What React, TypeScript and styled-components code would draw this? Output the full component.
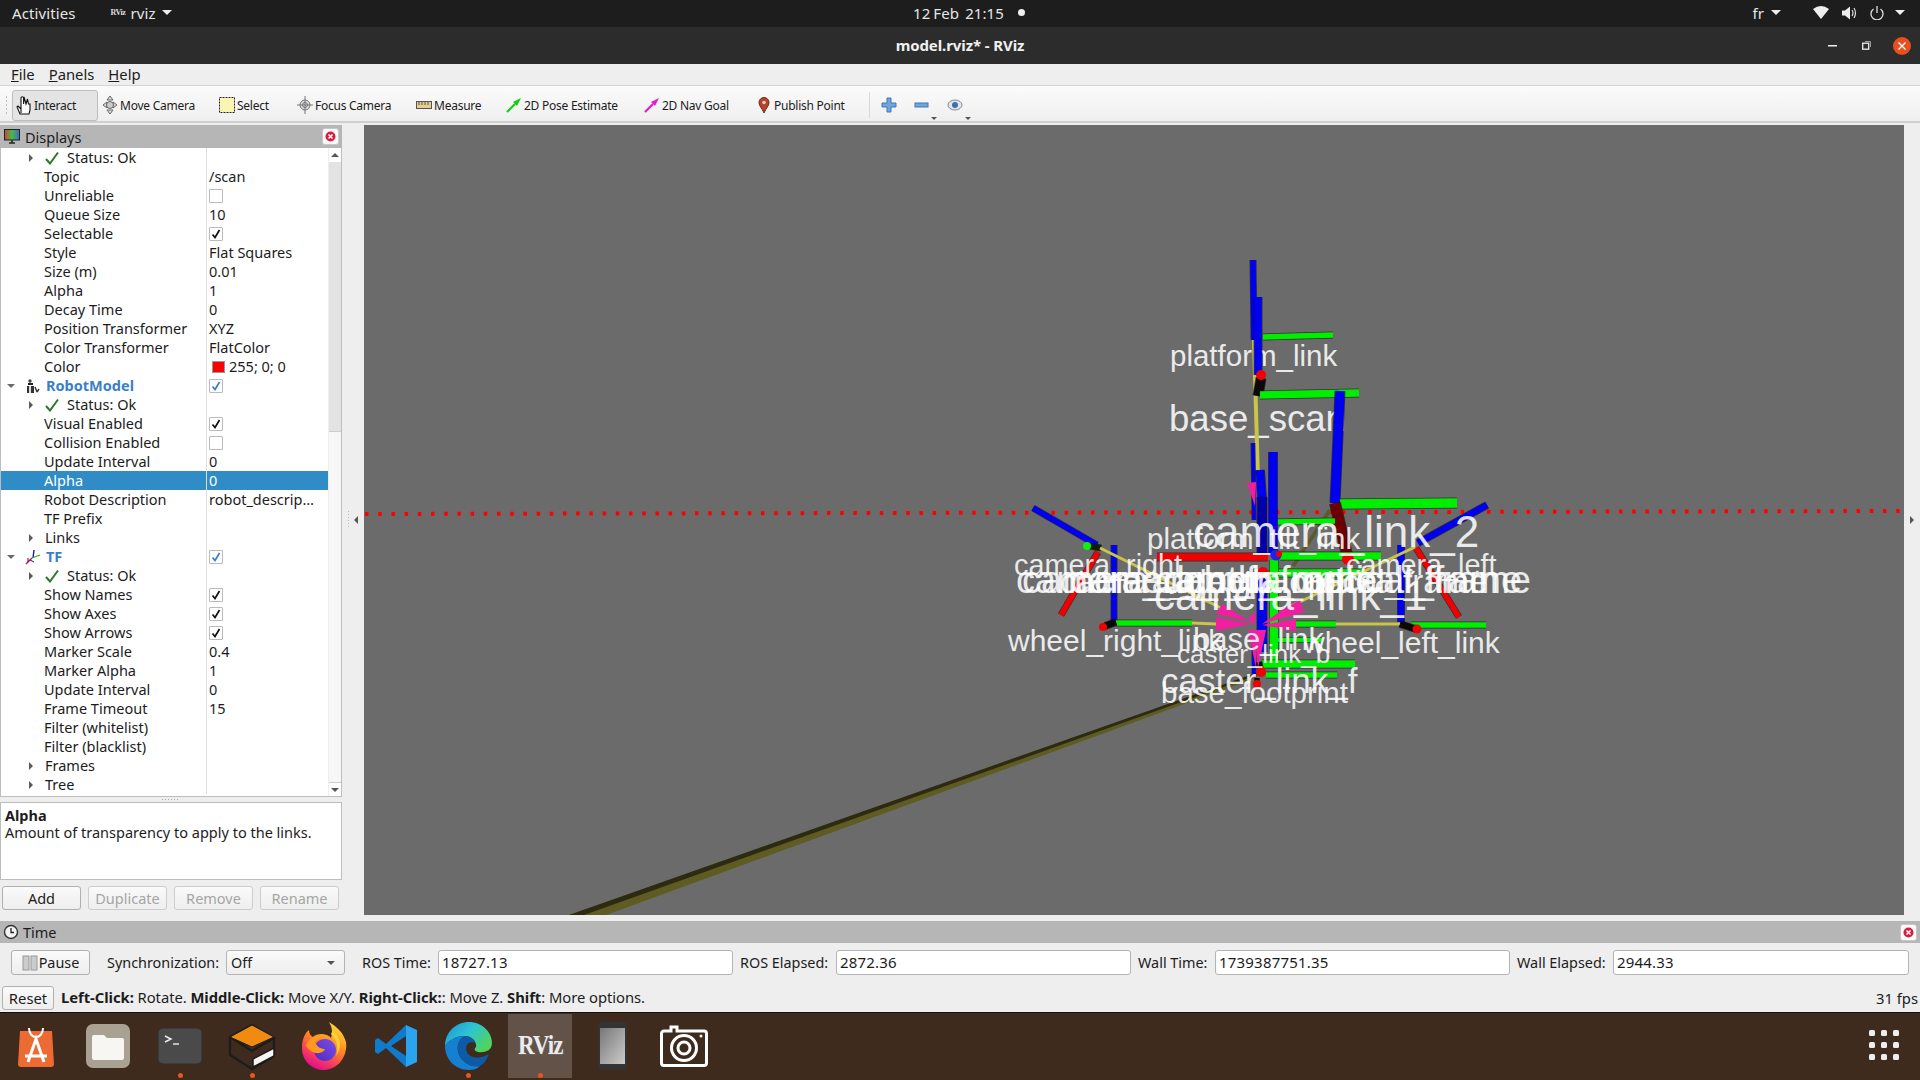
import React from "react";
import styled, { createGlobalStyle } from "styled-components";

const UI = `"Noto Sans", "Open Sans", sans-serif`;

const Global = createGlobalStyle`
  html, body { margin: 0; padding: 0; width: 1920px; height: 1080px; overflow: hidden; background: #eee; }
  #root { width: 1920px; height: 1080px; }
  * { box-sizing: border-box; }
`;

const Page = styled.div`
  width: 1920px; height: 1080px; display: flex; flex-direction: column;
  font-family: ${UI}; font-size: 14.5px; letter-spacing: 0; color: #1c1c1c; background: #eee; overflow: hidden;
`;

/* GNOME top bar */
const TopBar = styled.div`
  height: 27px; flex: none; background: #1d1d1d; color: #e6e6e6; display: grid;
  grid-template-columns: 1fr auto 1fr; align-items: center; font-size: 15px; padding: 0 15px 2px 12px; letter-spacing: 0.1px;
`;
const TopLeft = styled.div`display: flex; align-items: center;`;
const TopRight = styled.div`display: flex; align-items: center; justify-content: flex-end;`;
const AppName = styled.div`display: flex; align-items: center; gap: 6px; margin-left: 35px;`;
const Caret = styled.span<{ $c?: string; $l?: number }>`
  width: 0; height: 0; border-left: 5px solid transparent; border-right: 5px solid transparent;
  border-top: 5px solid ${(p) => p.$c || "#eee"}; margin-left: ${(p) => p.$l ?? 0}px;
`;
const Clock = styled.div`display: flex; align-items: center; gap: 14px; margin-left: 21px; word-spacing: -1px;`;
const Dot = styled.span`width: 7px; height: 7px; border-radius: 50%; background: #eee;`;
const Tiny = styled.span`font: 700 8px "Liberation Serif", serif; letter-spacing: -0.5px; color: #ddd; width: 14px;`;

/* Window title */
const TitleBar = styled.div`
  height: 37px; flex: none; background: #2c2c2c; color: #f0f0f0; font-weight: 700; font-size: 15px; padding-bottom: 1px;
  display: flex; align-items: center; justify-content: center; position: relative; letter-spacing: -0.1px;
`;
const WinControls = styled.div`
  position: absolute; right: 9px; top: 9px; height: 19px; display: flex; align-items: center;
`;
const WinClose = styled.span`
  width: 18px; height: 18px; border-radius: 50%; background: #e4501f; display: flex; align-items: center; justify-content: center; margin-left: 22px;
`;

const MenuBar = styled.div`
  height: 22px; flex: none; background: #eee; border-bottom: 1px solid #d4d4d4; display: flex; align-items: center;
  gap: 14px; padding: 0 0 1px 11px; font-size: 14.8px;
`;
const ToolBar = styled.div`
  height: 37px; flex: none; display: flex; align-items: center; padding: 3px 0 0 12px; position: relative;
  background: linear-gradient(#fbfbfb, #efefef); border-bottom: 2px solid #cfcfcf; font-size: 12px; letter-spacing: -0.25px;
`;
const Grip = styled.span`
  position: absolute; left: 5px; top: 9px; height: 20px; width: 3px;
  background: radial-gradient(circle, #bbb 1px, transparent 1px) 0 0 / 3px 4px;
`;
const ToolButton = styled.div<{ $w: number; $active?: boolean }>`
  width: ${(p) => p.$w}px; height: 31px; display: flex; align-items: center; gap: 2px; padding-left: 3px; white-space: nowrap;
  border-radius: 3px; border: 1px solid ${(p) => (p.$active ? "#bdbdbd" : "transparent")};
  background: ${(p) => (p.$active ? "#e4e4e4" : "transparent")};
`;
const ToolSep = styled.span`width: 1px; height: 26px; background: #d8d8d8; margin-right: 11px;`;
const MiniTool = styled.span<{ $w: number }>`width: ${(p) => p.$w}px; display: flex; align-items: center; position: relative; height: 31px;`;
const MiniCaret = styled.span<{ $r: number }>`
  position: absolute; right: ${(p) => p.$r}px; bottom: 1px; width: 0; height: 0;
  border-left: 3px solid transparent; border-right: 3px solid transparent; border-top: 3px solid #555;
`;

/* Main */
const Main = styled.div`height: 792px; flex: none; display: flex; padding-top: 2px;`;
const LeftPanel = styled.div`width: 342px; flex: none; display: flex; flex-direction: column;`;
const PanelHead = styled.div`
  height: 23px; flex: none; background: #b6b6b6; display: flex; align-items: center; gap: 5px; padding: 0 3px 0 4px; font-size: 14.5px;
`;
const HeadTitle = styled.span`flex: 1;`;
const CloseBtn = styled.span`
  width: 17px; height: 17px; border-radius: 3px; background: #fafafa; border: 1px solid #c8c8c8; display: flex; align-items: center; justify-content: center;
`;
const Tree = styled.div`
  height: 649px; flex: none; display: flex; background: #fff; border: 1px solid #bdbdbd; border-top: 0; 
`;
const Rows = styled.div`width: 327px; flex: none; overflow: hidden;`;
const Row = styled.div<{ $sel?: boolean }>`
  height: 19px; display: flex; line-height: 19px; white-space: nowrap;
  background: ${(p) => (p.$sel ? "#308cc6" : "transparent")}; color: ${(p) => (p.$sel ? "#fff" : "inherit")};
`;
const NameCell = styled.div<{ $pad: number }>`
  width: 205px; flex: none; display: flex; align-items: center; padding-left: ${(p) => p.$pad}px;
`;
const ValueCell = styled.div`
  flex: 1; border-left: 1px solid #dedede; padding-left: 2px; display: flex; align-items: center; overflow: hidden;
`;
const RArrow = styled.span`
  width: 0; height: 0; border-top: 4px solid transparent; border-bottom: 4px solid transparent; border-left: 4px solid #5a5a5a;
  margin-right: 12px;
`;
const DArrow = styled.span`
  width: 0; height: 0; border-left: 4px solid transparent; border-right: 4px solid transparent; border-top: 4px solid #6a6a6a;
  margin-right: 10px;
`;
const Blue = styled.span`color: #3a7fc9; font-weight: 700; margin-left: 5px;`;
const Box = styled.span`
  width: 14px; height: 14px; border: 1px solid #bbb; background: #fff; display: flex; align-items: center; justify-content: center; border-radius: 1px;
`;
const Swatch = styled.span`width: 13px; height: 12px; background: #f00; border: 1px solid #999; margin: 0 4px 0 3px;`;
const Scroll = styled.div`width: 13px; flex: none; display: flex; flex-direction: column; background: #f7f7f7; border-left: 1px solid #eee;`;
const ScrollEnd = styled.div<{ $down?: boolean }>`
  height: 14px; flex: none; background: #fff; display: flex; align-items: center; justify-content: center;
  ${(p) => (p.$down ? "border-top: 1px solid #ccc; margin-top: auto;" : "")}
`;
const ScrollThumb = styled.div`height: 270px; flex: none; background: #e3e3e3; border-bottom: 1px solid #ccc;`;
const UpTri = styled.span`width:0;height:0;border-left:4px solid transparent;border-right:4px solid transparent;border-bottom:4px solid #555;`;
const DownTri = styled.span`width:0;height:0;border-left:4px solid transparent;border-right:4px solid transparent;border-top:4px solid #555;`;
const SplitGap = styled.div`height: 5px; flex: none; display: flex; align-items: center; justify-content: center;`;
const HDots = styled.span`width: 18px; height: 1px; background: repeating-linear-gradient(90deg, #aaa 0 1px, transparent 1px 3px);`;
const Desc = styled.div`
  height: 78px; flex: none; background: #fff; border: 1px solid #bdbdbd; padding: 4px 4px; line-height: 17px;
`;
const DescTitle = styled.div`font-weight: 700;`;
const PanelButtons = styled.div`display: flex; gap: 7px; padding: 6px 0 0 2px;`;
const Btn = styled.div<{ $off?: boolean; $w: number; $h?: number }>`
  width: ${(p) => p.$w}px; height: ${(p) => p.$h ?? 24}px; flex: none; border: 1px solid ${(p) => (p.$off ? "#cdcdcd" : "#b0b0b0")}; border-radius: 3px;
  background: linear-gradient(#fafafa, #eee); display: flex; align-items: center; justify-content: center; gap: 1px;
  color: ${(p) => (p.$off ? "#a5a5a5" : "inherit")};
`;
const VSplit = styled.div<{ $w: number }>`
  width: ${(p) => p.$w}px; flex: none; display: flex; align-items: center; justify-content: center; gap: 5px; position: relative;
`;
const VDots = styled.span`width: 1px; height: 18px; background: repeating-linear-gradient(#bbb 0 1px, transparent 1px 3px);`;
const LTri = styled.span`width:0;height:0;border-top:4px solid transparent;border-bottom:4px solid transparent;border-right:4px solid #555;`;
const RTri = styled.span`width:0;height:0;border-top:4px solid transparent;border-bottom:4px solid transparent;border-left:4px solid #555;`;
const Viewport = styled.div`width: 1540px; height: 790px; flex: none; background: #6b6b6b;`;
const Scene = styled.svg`display: block; width: 1540px; height: 790px;`;
const Label3D = styled.text`font-family: "Liberation Sans", sans-serif; fill: #fff; letter-spacing: 0; opacity: 0.86;`;

/* Time panel */
const TimeHead = styled(PanelHead)`margin-top: 6px; flex: none; height: 22px; padding-left: 3px; gap: 4px;`;
const TimeRow = styled.div`height: 25px; flex: none; margin-top: 7px; display: flex; align-items: center; padding-left: 11px; font-size: 14.4px;`;
const TimeLabel = styled.span<{ $w: number; $ml: number }>`width: ${(p) => p.$w}px; margin-left: ${(p) => p.$ml}px; flex: none; white-space: nowrap;`;
const Field = styled.div<{ $w: number }>`
  width: ${(p) => p.$w}px; height: 25px; flex: none; background: #fff; border: 1px solid #b4b4b4; border-radius: 3px; padding-left: 3px; line-height: 22px; font-size: 15px; letter-spacing: .2px;
`;
const Combo = styled.div`
  width: 119px; height: 25px; flex: none; background: linear-gradient(#fafafa, #eee); border: 1px solid #b4b4b4; border-radius: 3px; padding: 0 9px 0 4px;
  display: flex; align-items: center; justify-content: space-between;
`;
const StatusRow = styled.div`height: 24px; margin-top: 11px; flex: none; display: flex; align-items: center; padding: 0 2px; white-space: nowrap; font-size: 14.8px;`;
const StatusText = styled.span`margin-left: 7px; flex: 1; letter-spacing: -.05px; padding-bottom: 2px;`;
const Dock = styled.div`
  margin-top: 2px; height: 68px; flex: none; background: #3f2a1e; border-top: 1px solid #15100c; display: flex; align-items: center; position: relative; padding-bottom: 2px;
`;
const DockSlot = styled.div<{ $active?: boolean }>`
  width: 72px; height: 64px; flex: none; padding: 0 4px; display: flex; align-items: center; justify-content: center; position: relative;
  background: ${(p) => (p.$active ? "rgba(255,255,255,.19)" : "transparent")}; background-clip: content-box; 
`;
const DockPip = styled.span`position: absolute; bottom: 0; left: 50%; margin-left: -2.5px; width: 5px; height: 5px; border-radius: 50%; background: #e95420;`;
const RVizLogo = styled.span`font: 700 27px "Liberation Serif", serif; color: #ececec; letter-spacing: -1px; transform: scaleX(.85); text-shadow: 1px 1px 0 #666;`;
const AppGrid = styled.div`
  position: absolute; right: 21px; top: 17px; display: grid; grid-template-columns: repeat(3, 6px); gap: 6px;
`;
const GridDot = styled.span`width: 6px; height: 6px; border-radius: 1.5px; background: #eee;`;

type Rw = { k: "leaf" | "exp" | "status" | "disp"; n?: string; v?: string; c?: boolean; blue?: boolean; color?: boolean; icon?: string; sel?: boolean };
const rows: Rw[] = [
  { k: "status" }, { k: "leaf", n: "Topic", v: "/scan" }, { k: "leaf", n: "Unreliable", c: false }, { k: "leaf", n: "Queue Size", v: "10" },
  { k: "leaf", n: "Selectable", c: true }, { k: "leaf", n: "Style", v: "Flat Squares" }, { k: "leaf", n: "Size (m)", v: "0.01" },
  { k: "leaf", n: "Alpha", v: "1" }, { k: "leaf", n: "Decay Time", v: "0" }, { k: "leaf", n: "Position Transformer", v: "XYZ" },
  { k: "leaf", n: "Color Transformer", v: "FlatColor" }, { k: "leaf", n: "Color", v: "255; 0; 0", color: true },
  { k: "disp", n: "RobotModel", c: true, blue: true, icon: "robot" }, { k: "status" }, { k: "leaf", n: "Visual Enabled", c: true },
  { k: "leaf", n: "Collision Enabled", c: false }, { k: "leaf", n: "Update Interval", v: "0" }, { k: "leaf", n: "Alpha", v: "0", sel: true },
  { k: "leaf", n: "Robot Description", v: "robot_descrip…" }, { k: "leaf", n: "TF Prefix" }, { k: "exp", n: "Links" },
  { k: "disp", n: "TF", c: true, blue: true, icon: "tf" }, { k: "status" }, { k: "leaf", n: "Show Names", c: true }, { k: "leaf", n: "Show Axes", c: true },
  { k: "leaf", n: "Show Arrows", c: true }, { k: "leaf", n: "Marker Scale", v: "0.4" }, { k: "leaf", n: "Marker Alpha", v: "1" },
  { k: "leaf", n: "Update Interval", v: "0" }, { k: "leaf", n: "Frame Timeout", v: "15" }, { k: "leaf", n: "Filter (whitelist)" },
  { k: "leaf", n: "Filter (blacklist)" }, { k: "exp", n: "Frames" }, { k: "exp", n: "Tree" },
];

const CheckMark = ({ blue }: { blue?: boolean }) => (
  <svg width="10" height="10" viewBox="0 0 10 10"><path d="M1.5 5.5 L4 8.5 L8.5 1" fill="none" stroke={blue ? "#3a7fc9" : "#111"} strokeWidth="1.7" /></svg>
);
const CheckGap = styled.svg`margin-right: 8px;`;
const GreenCheck = () => (
  <CheckGap width="14" height="14" viewBox="0 0 14 14"><path d="M1 8 L5 12.5 L13 1.5" fill="none" stroke="#2b7a2b" strokeWidth="2" /></CheckGap>
);
const RobotIcon = () => (
  <svg width="16" height="16" viewBox="0 0 16 16">
    <circle cx="5" cy="3" r="1.7" fill="#445" /><rect x="3" y="5" width="5" height="2" fill="#222" /><rect x="2" y="8" width="7" height="7" fill="#333" /><rect x="4" y="8" width="2" height="7" fill="#ddd" />
    <path d="M10 9 L12 14 M14 11 L12 14" stroke="#333" strokeWidth="1.4" />
  </svg>
);
const TfIcon = () => (
  <svg width="16" height="16" viewBox="0 0 16 16">
    <path d="M7 9 L1 15" stroke="#e11" strokeWidth="1.4" /><path d="M8 9 L9 1" stroke="#11c" strokeWidth="1.4" /><path d="M7 9 L15 6" stroke="#1b1" strokeWidth="1.2" /><path d="M3 13 L3 9 M5 11 L9 13" stroke="#11c" strokeWidth="1" />
  </svg>
);
const CloseDot = () => (
  <svg width="11" height="11" viewBox="0 0 11 11"><circle cx="5.5" cy="5.5" r="5" fill="#d81e3c" /><path d="M3.5 3.5 L7.5 7.5 M7.5 3.5 L3.5 7.5" stroke="#fff" strokeWidth="1.5" /></svg>
);

const tools: { w: number; label: string; icon: React.ReactNode; active?: boolean }[] = [
  { w: 86, label: "Interact", active: true, icon: <svg width="16" height="22" viewBox="0 0 16 22"><path d="M5 19 V4 a1.3 1.3 0 0 1 2.6 0 V10 L8 3 l2 7 l1.5 -5 l1 5 l1.5 0 V16 l-1 4 H4 L1 13 l1 -1 l3 3" fill="#fff" stroke="#111" strokeWidth="1.1" /></svg> },
  { w: 117, label: "Move Camera", icon: <svg width="16" height="20" viewBox="0 0 16 20"><path d="M8 1 L11 5 H5 Z M8 19 L11 15 H5 Z M1 10 L5 7 V13 Z M15 10 L11 7 V13 Z" fill="#ddd" stroke="#666" /><circle cx="8" cy="10" r="3.5" fill="#ccc" stroke="#666" /></svg> },
  { w: 78, label: "Select", icon: <svg width="16" height="16" viewBox="0 0 16 16"><rect x="0.5" y="0.5" width="15" height="15" fill="#fbf5b4" stroke="#222" strokeDasharray="2 1" /></svg> },
  { w: 119, label: "Focus Camera", icon: <svg width="16" height="20" viewBox="0 0 16 20"><circle cx="8" cy="10" r="5" fill="#ddd" stroke="#777" /><circle cx="8" cy="10" r="2.5" fill="none" stroke="#777" /><path d="M8 1 V19 M0 10 H16" stroke="#777" /></svg> },
  { w: 90, label: "Measure", icon: <svg width="16" height="8" viewBox="0 0 16 8"><rect x="0.5" y="0.5" width="15" height="7" fill="#e4cf8e" stroke="#555" /><path d="M3 1 V4 M6 1 V4 M9 1 V4 M12 1 V4" stroke="#555" /></svg> },
  { w: 138, label: "2D Pose Estimate", icon: <svg width="16" height="16" viewBox="0 0 16 16"><path d="M1 15 L9 7" stroke="#1c1" strokeWidth="2.2" /><path d="M15 1 L7 5 L11 9 Z" fill="#1c1" /></svg> },
  { w: 112, label: "2D Nav Goal", icon: <svg width="16" height="16" viewBox="0 0 16 16"><path d="M1 15 L9 7" stroke="#e01fc8" strokeWidth="2.2" /><path d="M15 1 L7 5 L11 9 Z" fill="#e01fc8" /></svg> },
  { w: 117, label: "Publish Point", icon: <svg width="16" height="17" viewBox="0 0 16 17"><path d="M8 16 C6 11 3 9 3 5.5 a5 5 0 0 1 10 0 C13 9 10 11 8 16 Z" fill="#b5432b" stroke="#70291a" /><circle cx="8" cy="5.5" r="1.8" fill="#e9c7b8" /></svg> },
];

/* ---- 3D scene, in screen coordinates ---- */
type Ax = [number, number, number, number, number, string, string?];
const B = "#0000f0", G = "#00ee00", R = "#f00000", K = "#0c0808", Y = "#c9c44a", O = "#5c5b30";
const backAxes: Ax[] = [
  [1254, 340, 1258, 480, 4, Y], [1258, 480, 1259, 530, 3, Y],
  [1253, 260, 1254, 340, 7, B], [1263, 337, 1333, 335, 7, G], [1261, 378, 1258, 396, 11, K], [1258, 297, 1258, 375, 9, B],
  [1260, 395, 1359, 393, 9, G], [1340, 391, 1335, 503, 11, B], [1340, 504, 1457, 503, 11, G],
  [1330, 510, 1293, 566, 4, O], [1335, 503, 1348, 559, 12, "#6a0000"],
  [1253, 443, 1254, 520, 5, B], [1278, 522, 1335, 521, 7, G], [1273, 452, 1273, 555, 10, B], [1260, 470, 1262, 500, 10, B], [1262, 497, 1262, 553, 11, "#0000a8"],
  [1157, 557, 1268, 557, 9, R], [1280, 556, 1381, 556, 9, G], [1278, 573, 1367, 573, 9, G],
  [1033, 508, 1097, 545, 7, B], [1098, 552, 1061, 615, 7, R], [1114, 545, 1114, 622, 7, B], [1090, 546, 1101, 548, 7, "#0b1e0b"],
  [1100, 548, 1221, 608, 3, Y], [1116, 623, 1192, 623, 7, G], [1192, 623, 1216, 624, 3, Y], [1105, 626, 1116, 622, 8, K],
  [1401, 545, 1401, 622, 8, B], [1418, 543, 1487, 505, 8, B], [1416, 548, 1459, 617, 7, R], [1415, 547, 1289, 607, 3, Y],
  [1336, 624, 1400, 624, 3, Y], [1296, 624, 1336, 624, 7, G], [1411, 625, 1486, 625, 7, G], [1400, 624, 1416, 629, 8, K],
  [1262, 570, 1262, 652, 11, B], [1274, 560, 1274, 661, 10, G], [1278, 640, 1323, 640, 6, G],
  [1262, 664, 1355, 664, 9, G], [1266, 675, 1337, 675, 7, G], [1254, 643, 1254, 677, 5, B], [1259, 662, 1261, 672, 7, K], [1257, 678, 1257, 684, 6, K],
];
const dots: [number, number, number, string][] = [
  [1261, 375, 5, R], [1348, 559, 6, R], [1087, 546, 4, "#11ee11"], [1103, 627, 4, R], [1417, 629, 4.5, R], [1263, 573, 6, R],
  [1276, 555, 5.5, "#2222e0"], [1279, 554, 3, R], [1261, 672, 5, R], [1257, 684, 4, R],
];
const cones: string[] = [
  "1247,483 1256,482 1255,506", "1216,617 1216,631 1251,624", "1296,619 1296,631 1262,625", "1222,604 1251,622 1216,614",
  "1282,610 1300,600 1304,612 1262,624", "1248,618 1256,612 1254,626", "1248,630 1256,630 1256,668", "1254,630 1266,630 1258,668",
];
const backLabels: [string, number, number, number][] = [["platform_link", 1170, 366, 29.5], ["base_scan", 1169, 431, 36.6]];
const labels: [string, number, number, number][] = [
  ["camera_link_2", 1193, 547, 44], ["platform_tilt_link", 1147, 549, 29.5], ["camera_right", 1014, 575, 28.8], ["camera_left", 1346, 575, 28.8],
  ["camera_rgb_frame", 1022, 593, 38], ["camera_depth_frame", 1016, 593, 38], ["camera_rgb_optical_frame", 1070, 593, 38], ["camera_depth_optical_frame", 1060, 593, 33],
  ["camera_optical_frame", 1155, 593, 38], ["camera_link_1", 1154, 610, 42],
  ["wheel_right_link", 1008, 651, 30], ["wheel_left_link", 1303, 653, 30], ["base_link", 1193, 650, 31], ["caster_link_b", 1177, 663, 26],
  ["caster_link_f", 1161, 693, 35], ["base_footprint", 1161, 703, 29.5],
];
const Axis = ({ a }: { a: Ax }) => {
  const [x1, y1, x2, y2, w, c] = a;
  return (
    <g>
      <line x1={x1} y1={y1} x2={x2} y2={y2} stroke="#000" strokeOpacity={w > 4 ? 0.55 : 0} strokeWidth={w} />
      <line x1={x1} y1={y1} x2={x2} y2={y2} stroke={c} strokeWidth={w > 4 ? w - 1.5 : w} />
    </g>
  );
};
const RobotScene = () => (
  <Scene viewBox="364 125 1540 790">
    <polygon points="569,915 606,915 1258,677 1256,673" fill="#5e5c22" />
    <polygon points="569,915 584,915 1257,675 1256,673" fill="#2c2b12" />
    {backLabels.map(([t, x, y, s]) => <Label3D key={t} x={x} y={y} fontSize={s}>{t}</Label3D>)}
    <line x1="365" y1="514" x2="1904" y2="511" stroke="#f00" strokeWidth="4" strokeDasharray="3.5 9.7" />
    {backAxes.map((a, i) => <Axis key={i} a={a} />)}
    {cones.map((p, i) => <polygon key={i} points={p} fill="#f01fa0" />)}
    {dots.map(([x, y, r, c], i) => <circle key={i} cx={x} cy={y} r={r} fill={c} />)}
    {labels.map(([t, x, y, s]) => <Label3D key={t} x={x} y={y} fontSize={s}>{t}</Label3D>)}
  </Scene>
);

export default function App() {
  return (
    <Page>
      <Global />
      <TopBar>
        <TopLeft>
          Activities
          <AppName><Tiny>RViz</Tiny>rviz<Caret /></AppName>
        </TopLeft>
        <Clock>12 Feb&nbsp; 21:15<Dot /></Clock>
        <TopRight>
          fr<Caret $l={7} />
          <svg width="16" height="13" viewBox="0 0 16 13" style={{ marginLeft: 32 }}><path d="M0 3 Q8 -3 16 3 L8 13 Z" fill="#eee" /></svg>
          <svg width="15" height="14" viewBox="0 0 15 14" style={{ marginLeft: 13 }}><path d="M0 4.5 H3 L8 0.5 V13.5 L3 9.5 H0 Z" fill="#eee" /><path d="M10 4 Q12 7 10 10 M12 2 Q15 7 12 12" fill="none" stroke="#ddd" strokeWidth="1.2" /></svg>
          <svg width="14" height="14" viewBox="0 0 14 14" style={{ marginLeft: 13 }}><path d="M3.5 3 A6 6 0 1 0 10.5 3 M7 0 V7" fill="none" stroke="#ddd" strokeWidth="1.3" /></svg>
          <Caret $l={11} />
        </TopRight>
      </TopBar>
      <TitleBar>
        model.rviz* - RViz
        <WinControls>
          <svg width="9" height="2" viewBox="0 0 9 2"><rect width="9" height="1.5" fill="#eee" /></svg>
          <svg width="9" height="9" viewBox="0 0 9 9" style={{ marginLeft: 25 }}><rect x="0.7" y="2.2" width="6" height="6" fill="none" stroke="#eee" strokeWidth="1.3" /><path d="M3 .5 H8.5 V6" fill="none" stroke="#999" /></svg>
          <WinClose><svg width="10" height="10" viewBox="0 0 10 10"><path d="M1.5 1.5 L8.5 8.5 M8.5 1.5 L1.5 8.5" stroke="#fff" strokeWidth="1.3" /></svg></WinClose>
        </WinControls>
      </TitleBar>
      <MenuBar>
        <span><u>F</u>ile</span><span><u>P</u>anels</span><span><u>H</u>elp</span>
      </MenuBar>
      <ToolBar>
        <Grip />
        {tools.map((t) => (
          <ToolButton key={t.label} $w={t.w} $active={t.active}>{t.icon}{t.label}</ToolButton>
        ))}
        <ToolSep />
        <MiniTool $w={33}><svg width="16" height="16" viewBox="0 0 16 16"><path d="M6 1 H10 V6 H15 V10 H10 V15 H6 V10 H1 V6 H6 Z" fill="#6ea5dd" stroke="#3e78b5" /></svg></MiniTool>
        <MiniTool $w={33}><svg width="16" height="6" viewBox="0 0 16 6"><rect x="1" y="1" width="13" height="4" fill="#6ea5dd" stroke="#3e78b5" /></svg><MiniCaret $r={10} /></MiniTool>
        <MiniTool $w={24}><svg width="16" height="12" viewBox="0 0 16 12"><ellipse cx="8" cy="6" rx="7" ry="5" fill="#dfe5ec" stroke="#889" /><circle cx="8" cy="6" r="3" fill="#3f6faa" /></svg><MiniCaret $r={0} /></MiniTool>
      </ToolBar>
      <Main>
        <LeftPanel>
          <PanelHead>
            <svg width="16" height="15" viewBox="0 0 16 15"><defs><linearGradient id="scr" x1="0" x2="1"><stop offset="0" stopColor="#c44" /><stop offset=".5" stopColor="#4b4" /><stop offset="1" stopColor="#46c" /></linearGradient></defs><rect x="0.5" y="0.5" width="15" height="10.5" fill="url(#scr)" stroke="#222" /><path d="M5 14 H11 M8 11 V14" stroke="#222" strokeWidth="1.5" /></svg>
            <HeadTitle>Displays</HeadTitle>
            <CloseBtn><CloseDot /></CloseBtn>
          </PanelHead>
          <Tree>
            <Rows>
              {rows.map((r, i) => (
                <Row key={i} $sel={r.sel}>
                  <NameCell $pad={r.k === "disp" ? 6 : r.k === "leaf" ? 43 : 28}>
                    {r.k === "disp" && <><DArrow />{r.icon === "robot" ? <RobotIcon /> : <TfIcon />}<Blue>{r.n}</Blue></>}
                    {r.k === "status" && <><RArrow /><GreenCheck />Status: Ok</>}
                    {r.k === "exp" && <><RArrow />{r.n}</>}
                    {r.k === "leaf" && r.n}
                  </NameCell>
                  <ValueCell>
                    {r.c !== undefined && <Box>{r.c && <CheckMark blue={r.blue} />}</Box>}
                    {r.color && <Swatch />}
                    {r.v}
                  </ValueCell>
                </Row>
              ))}
            </Rows>
            <Scroll>
              <ScrollEnd><UpTri /></ScrollEnd>
              <ScrollThumb />
              <ScrollEnd $down><DownTri /></ScrollEnd>
            </Scroll>
          </Tree>
          <SplitGap><HDots /></SplitGap>
          <Desc>
            <DescTitle>Alpha</DescTitle>
            Amount of transparency to apply to the links.
          </Desc>
          <PanelButtons>
            <Btn $w={79}>Add</Btn><Btn $w={79} $off>Duplicate</Btn><Btn $w={79} $off>Remove</Btn><Btn $w={79} $off>Rename</Btn>
          </PanelButtons>
        </LeftPanel>
        <VSplit $w={22}><VDots /><LTri /></VSplit>
        <Viewport><RobotScene /></Viewport>
        <VSplit $w={16}><RTri /></VSplit>
      </Main>
      <TimeHead>
        <svg width="16" height="16" viewBox="0 0 16 16"><circle cx="8" cy="8" r="6.5" fill="#f4f4f4" stroke="#333" strokeWidth="1.4" /><path d="M8 4 V8.5 H11" fill="none" stroke="#222" strokeWidth="1.3" /></svg>
        <HeadTitle>Time</HeadTitle>
        <CloseBtn><CloseDot /></CloseBtn>
      </TimeHead>
      <TimeRow>
        <Btn $w={79} $h={25}><svg width="16" height="16" viewBox="0 0 16 16"><rect x="1" y="1" width="6" height="14" fill="#ccc" stroke="#999" /><rect x="9" y="1" width="6" height="14" fill="#ccc" stroke="#999" /></svg>Pause</Btn>
        <TimeLabel $w={119} $ml={17}>Synchronization:</TimeLabel>
        <Combo>Off<DownTri /></Combo>
        <TimeLabel $w={76} $ml={17}>ROS Time:</TimeLabel>
        <Field $w={295}>18727.13</Field>
        <TimeLabel $w={96} $ml={7}>ROS Elapsed:</TimeLabel>
        <Field $w={295}>2872.36</Field>
        <TimeLabel $w={77} $ml={7}>Wall Time:</TimeLabel>
        <Field $w={295}>1739387751.35</Field>
        <TimeLabel $w={96} $ml={7}>Wall Elapsed:</TimeLabel>
        <Field $w={296}>2944.33</Field>
      </TimeRow>
      <StatusRow>
        <Btn $w={52}>Reset</Btn>
        <StatusText><b>Left-Click:</b> Rotate. <b>Middle-Click:</b> Move X/Y. <b>Right-Click:</b>: Move Z. <b>Shift</b>: More options.</StatusText>
        31 fps
      </StatusRow>
      <Dock>
        <DockSlot>
          <svg width="38" height="44" viewBox="0 0 38 44"><path d="M3 7 H35 L37 40 a3 3 0 0 1 -3 3 H4 a3 3 0 0 1 -3 -3 Z" fill="#ee6a33" /><path d="M12 4 C12 16 26 16 26 4" fill="none" stroke="#fff" strokeWidth="2" /><path d="M11 38 L19 15 L27 38 M8 32 H30" fill="none" stroke="#fff" strokeWidth="3" /></svg>
        </DockSlot>
        <DockSlot>
          <svg width="44" height="44" viewBox="0 0 44 44"><rect width="44" height="44" rx="7" fill="#a9a292" /><path d="M6 13 a2 2 0 0 1 2 -2 H18 L21 14 H36 a2 2 0 0 1 2 2 V34 a2 2 0 0 1 -2 2 H8 a2 2 0 0 1 -2 -2 Z" fill="#f8f6f3" /></svg>
        </DockSlot>
        <DockSlot>
          <svg width="44" height="36" viewBox="0 0 44 36"><rect width="44" height="36" rx="5" fill="#4a4a4a" stroke="#2e2e2e" /><path d="M7 8 L13 11 L7 14" fill="none" stroke="#eee" strokeWidth="1.4" /><path d="M15 16 H21" stroke="#eee" strokeWidth="1.4" /></svg>
          <DockPip />
        </DockSlot>
        <DockSlot>
          <svg width="48" height="48" viewBox="0 0 48 48"><path d="M2 15 V33 L24 47 L46 34 V16 L24 3 Z M2 15 L24 29 L46 16" fill="none" stroke="#1c1c1c" strokeWidth="2.2" /><path d="M24 3 L46 15 L24 25 L2 15 Z" fill="#f18a10" stroke="#1c1c1c" strokeWidth="1" /><path d="M25 37 L46 26 V34 L25 45 Z" fill="#f6f6f6" stroke="#1c1c1c" strokeWidth="1.5" /></svg>
          <DockPip />
        </DockSlot>
        <DockSlot>
          <svg width="47" height="48" viewBox="0 0 47 48"><defs><linearGradient id="fx" x1=".8" y1="0" x2=".3" y2="1"><stop offset="0" stopColor="#ffe03a" /><stop offset=".45" stopColor="#ff8a1f" /><stop offset=".8" stopColor="#f5306a" /><stop offset="1" stopColor="#d5108a" /></linearGradient><linearGradient id="fg" x1="1" y1="0" x2="0" y2="1"><stop offset="0" stopColor="#7c4de8" /><stop offset="1" stopColor="#4f2ac0" /></linearGradient></defs><path d="M1 26 C1 17 4 11 8 8 C8 12 10 14 12 15 C17 10 27 12 30 16 C32 10 31 5 28 0 C36 5 42 10 45 20 C47 34 37 48 23 48 C10 48 1 38 1 26 Z" fill="url(#fx)" /><circle cx="24" cy="28" r="11" fill="url(#fg)" /><path d="M5 24 C7 16 16 11 25 15 C19 15 17 18 14 20 C16 25 20 27 24 27 C22 32 12 34 5 24 Z" fill="#ff9a1f" /><path d="M30 12 C36 18 38 26 35 34 C41 26 40 16 32 8 Z" fill="#ffd03a" /></svg>
        </DockSlot>
        <DockSlot>
          <svg width="42" height="42" viewBox="0 0 42 42"><path d="M31 0 L11 19 L3 13 L0 15 V27 L3 29 L11 23 L31 42 V31 L16 21 L31 11 Z" fill="#0e7ccb" /><path d="M31 0 L42 5 V37 L31 42 Z" fill="#2ba4ee" /></svg>
        </DockSlot>
        <DockSlot>
          <svg width="49" height="49" viewBox="0 0 49 49"><defs><linearGradient id="ed" x1="0" y1="0" x2="1" y2=".6"><stop offset="0" stopColor="#1a8fd8" /><stop offset=".5" stopColor="#2cc3d6" /><stop offset="1" stopColor="#4fd45e" /></linearGradient></defs><path d="M1 25 C1 11 12 1 25 1 C38 1 48 11 48 22 C48 30 40 32 34 31 C30 30 30 28 32 26 C33 22 29 15 21 15 C11 15 4 20 1 25 Z" fill="url(#ed)" /><path d="M1 25 C4 20 11 15 21 15 C15 18 13 24 14 30 C16 40 26 47 36 45 C33 48 29 49 25 49 C11 49 1 38 1 25 Z" fill="#1580d0" /><path d="M21 15 C26 15 30 18 31 22 C26 20 22 23 22 28 C23 36 33 40 45 33 C43 38 40 43 36 45 C26 47 16 40 14 30 C13 24 15 18 21 15 Z" fill="#0d5aa7" /></svg>
          <DockPip />
        </DockSlot>
        <DockSlot $active><RVizLogo>RViz</RVizLogo><DockPip /></DockSlot>
        <DockSlot>
          <svg width="29" height="48" viewBox="0 0 29 48"><rect width="29" height="48" rx="4" fill="#333" /><defs><linearGradient id="ph" x1="0" y1="0" x2="1" y2="1"><stop offset="0" stopColor="#777" /><stop offset="1" stopColor="#ccc" /></linearGradient></defs><rect x="2" y="6" width="25" height="36" fill="url(#ph)" /></svg>
        </DockSlot>
        <DockSlot>
          <svg width="48" height="44" viewBox="0 0 48 44"><path d="M9 7 H11 V3 H17 V7 H44 a2.5 2.5 0 0 1 2.5 2.5 V39 a2.5 2.5 0 0 1 -2.5 2.5 H4 a2.5 2.5 0 0 1 -2.5 -2.5 V9.5 A2.5 2.5 0 0 1 4 7 Z" fill="none" stroke="#fff" strokeWidth="3" /><circle cx="24" cy="24" r="12.5" fill="none" stroke="#fff" strokeWidth="3" /><circle cx="24" cy="24" r="6" fill="none" stroke="#fff" strokeWidth="3" /><circle cx="41" cy="12" r="1.5" fill="#fff" /></svg>
        </DockSlot>
        <AppGrid>{Array.from({ length: 9 }, (_, i) => <GridDot key={i} />)}</AppGrid>
      </Dock>
    </Page>
  );
}
